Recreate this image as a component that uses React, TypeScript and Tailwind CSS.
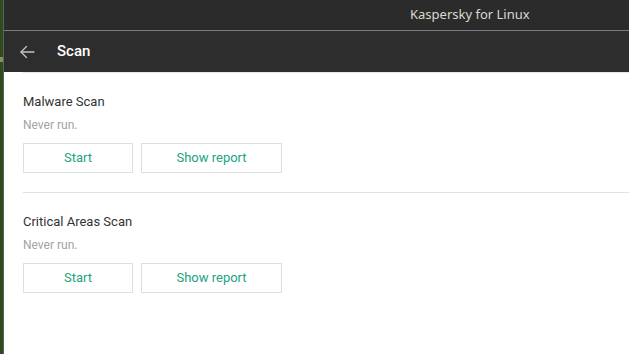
import React from "react";

interface IScan {
    name: string,
    status: string,
}

const scans: IScan[] = [
    { name: "Malware Scan", status: "Never run." },
    { name: "Critical Areas Scan", status: "Never run." },
];

const BackArrow = (): JSX.Element => (
    <svg width="16" height="16" viewBox="0 0 16 16" fill="none" stroke="#c4c4c4" strokeWidth="1.3" strokeLinecap="round" strokeLinejoin="round">
        <path d="M15 8H2" />
        <path d="M7.5 2.5L2 8l5.5 5.5" />
    </svg>
);

const App: React.FC = (): JSX.Element => {
    return (
        <div className="w-[629px] h-[354px] flex overflow-hidden bg-white font-['Roboto',sans-serif]">
            {/* desktop edge */}
            <div className="w-[3px] h-full bg-[#2f4a1c] flex flex-col">
                <div className="h-[57px]" />
                <div className="h-[5px] bg-[#8a8f5a]" />
            </div>
            <div className="w-px h-full bg-[#5f5f5f]" />

            <div className="flex-1 flex flex-col min-w-0">
                {/* window title */}
                <div className="h-[30px] bg-[#2b2b2b] flex items-center pl-[406px] shrink-0">
                    <span className="text-[13px] text-[#dcd8cf] font-['Noto_Sans','DejaVu_Sans',sans-serif]">
                        Kaspersky for Linux
                    </span>
                </div>
                <div className="h-px bg-[#7b7b7b] shrink-0" />

                {/* header */}
                <div className="h-[41px] bg-[#2d2d2d] flex items-center shrink-0">
                    <div className="ml-[15px] w-[16px] h-[16px] flex items-center">
                        <BackArrow />
                    </div>
                    <span className="ml-[22px] text-[15px] font-medium text-white">Scan</span>
                </div>

                <main className="flex-1 pl-[19px]">
                    <div className="h-px bg-[#e6e6e6]" />
                    {
                        scans.map((scan: IScan, index: number) => {
                            return (
                                <div key={index} className={index === 0 ? "pt-[20px] pb-[19px] border-b border-[#e3e3e3]" : "pt-[20px]"}>
                                    <div className="text-[13px] leading-[18px] text-[#333333]">{scan.name}</div>
                                    <div className="mt-[7px] text-[12px] leading-[14px] text-[#a3a3a3]">{scan.status}</div>
                                    <div className="mt-[11px] flex gap-[8px]">
                                        <button className="w-[110px] h-[30px] border border-[#dedede] text-[13px] text-[#22a382] bg-white">
                                            Start
                                        </button>
                                        <button className="w-[141px] h-[30px] border border-[#dedede] text-[13px] text-[#22a382] bg-white">
                                            Show report
                                        </button>
                                    </div>
                                </div>
                            )
                        })
                    }
                </main>
            </div>
        </div>
    )
}

export default App
